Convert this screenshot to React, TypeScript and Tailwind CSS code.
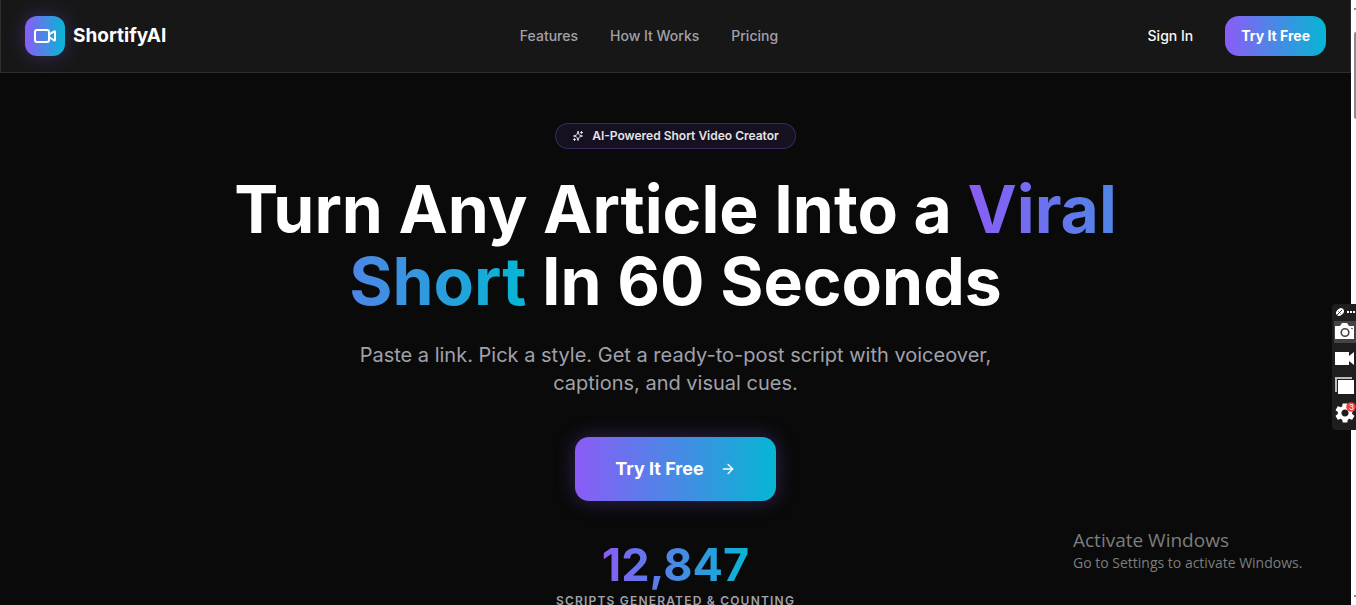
import { ArrowRight, Video } from 'lucide-react';
import { MdSettings } from 'react-icons/md';

const NAV_LINKS = [
  { label: 'Features', href: '#features' },
  { label: 'How It Works', href: '#how-it-works' },
  { label: 'Pricing', href: '#pricing' },
];

const SparkleIcon = () => (
  <svg viewBox="0 0 24 24" className="w-3 h-3" fill="none" stroke="currentColor" strokeWidth="2" strokeLinecap="round" strokeLinejoin="round" aria-hidden="true">
    <path d="m12 3-1.900 5.800a2 2 0 0 1-1.300 1.300L3 12l5.800 1.900a2 2 0 0 1 1.300 1.300L12 21l1.900-5.800a2 2 0 0 1 1.300-1.300L21 12l-5.800-1.900a2 2 0 0 1-1.300-1.300Z" />
    <path d="M5 3v4M3 5h4M19 17v4M17 19h4" transform="matrix(-1 0 0 1 24 0)" />
  </svg>
);

const Navbar = () => (
  <nav className="flex items-center justify-between px-6 py-4 bg-[#171717] border-x border-b border-[#2e2e2e] shrink-0">
    <a href="#top" className="flex items-center gap-2">
      <span className="w-10 h-10 rounded-xl flex items-center justify-center bg-linear-to-r/srgb from-[#8b5cf6] to-[#06b6d4] shadow-[0_0_20px_rgba(139,92,246,0.3)]">
        <Video className="w-6 h-6 text-white" />
      </span>
      <span className="text-[19px] leading-7 font-bold text-white">ShortifyAI</span>
    </a>

    <div className="flex items-center gap-8">
      {NAV_LINKS.map((link) => (
        <a key={link.href} href={link.href} className="text-sm font-medium text-[#a1a1aa]">
          {link.label}
        </a>
      ))}
    </div>

    <div className="flex items-center gap-4">
      <button type="button" className="h-10 px-4 text-sm font-medium text-[#fafafa]">Sign In</button>
      <button type="button" className="h-10 px-4 rounded-[14px] text-sm font-bold text-white bg-linear-to-r/srgb from-[#8b5cf6] to-[#06b6d4]">
        Try It Free
      </button>
    </div>
  </nav>
);

const Hero = () => (
  <main className="flex flex-col items-center px-6 pt-[50px] text-center">
    <div className="flex items-center gap-2 h-[26px] px-4 rounded-full border border-[#8b5cf6]/30 bg-[#8b5cf6]/10 text-[#e4e4e7]">
      <SparkleIcon />
      <span className="text-xs font-semibold">AI-Powered Short Video Creator</span>
    </div>

    <h1 className="mt-6 max-w-4xl text-[66px] leading-[72px] font-bold text-white">
      Turn Any Article Into a{' '}
      <span className="bg-linear-to-r/srgb from-[#8b5cf6] to-[#06b6d4] bg-clip-text text-transparent">Viral Short</span>{' '}
      In 60 Seconds
    </h1>

    <p className="mt-6 max-w-2xl text-xl leading-7 text-[#a1a1aa]">
      Paste a link. Pick a style. Get a ready-to-post script with voiceover, captions, and visual cues.
    </p>

    <button
      type="button"
      className="mt-10 h-16 px-10 flex items-center gap-4 rounded-[14px] text-lg font-bold text-white bg-linear-to-r/srgb from-[#8b5cf6] to-[#06b6d4] shadow-[0_0_20px_rgba(139,92,246,0.3)]"
    >
      Try It Free
      <ArrowRight className="w-4 h-4" />
    </button>

    <div className="mt-10">
      <p className="text-[45px] leading-[48px] font-bold">
        <span className="bg-linear-to-r/srgb from-[#8b5cf6] to-[#06b6d4] bg-clip-text text-transparent">12,847</span>
      </p>
      <p className="mt-1 text-xs font-semibold uppercase tracking-widest text-[#a1a1aa]">Scripts Generated &amp; Counting</p>
    </div>
  </main>
);

const Scrollbar = () => (
  <div className="w-[5px] shrink-0 bg-[#fcfcfc] flex flex-col items-end" aria-hidden="true">
    <div className="mt-2 h-[2px] w-[2px] bg-[#8b8b8b]" />
    <div className="mt-[22px] h-[87px] w-[2px] rounded-l-full bg-[#8b8b8b]" />
    <div className="mt-auto mb-2 h-[2px] w-[2px] bg-[#8b8b8b]" />
  </div>
);

const RecorderBar = () => (
  <div className="absolute right-0 top-[304px] w-6 h-[126px] rounded-l-sm bg-[#1e1e1e] overflow-hidden">
    <svg viewBox="0 0 24 126" className="w-full h-full" aria-hidden="true">
      <rect x="2" y="17" width="22" height="22" fill="#444" />
      {/* pen and menu dots */}
      <ellipse cx="8" cy="8" rx="4.400" ry="3.300" transform="rotate(-45 8 8)" fill="#fff" />
      <path d="M4.500 11.500 10 6M6.500 7.500l2 2" stroke="#1e1e1e" strokeWidth="0.900" />
      <path d="M15 7h2v2h-2zM18 7h2v2h-2zM21 7h2v2h-2z" fill="#fff" />
      {/* photo camera */}
      <path d="M3 22h5l2-3h5l2 3h5v13H3z" fill="#fff" />
      <circle cx="13" cy="28.500" r="3.800" fill="#fff" stroke="#444" strokeWidth="1.600" />
      <circle cx="20" cy="24.500" r="0.800" fill="#444" />
      {/* video camera */}
      <path d="M3 48h14v4l5-4v13l-5-4v4H3z" fill="#fff" />
      {/* stacked windows */}
      <path d="M3 73h17v2H5v13H3z" fill="#bbb" />
      <path d="M6 76h16v14H6z" fill="#fff" />
      {/* settings */}
      <MdSettings x="1" y="97" size={24} color="#fff" />
      <circle cx="19" cy="103" r="4.800" fill="#f0413c" />
    </svg>
    <span className="absolute left-[17px] top-[99px] text-[8px] leading-[8px] text-white">3</span>
  </div>
);

const App = () => (
  <div id="top" className="relative flex h-screen overflow-hidden bg-[#0a0a0a] font-['Inter',sans-serif]">
    <div className="flex-1 min-w-0 flex flex-col">
      <Navbar />
      <Hero />
    </div>
    <Scrollbar />
    <RecorderBar />
    <div className="absolute left-[1073px] top-[528px] font-['Open_Sans',sans-serif] text-[#7d7d7d]">
      <p className="text-[19px] leading-6">Activate Windows</p>
      <p className="text-sm leading-[22px]">Go to Settings to activate Windows.</p>
    </div>
  </div>
);

export default App;
